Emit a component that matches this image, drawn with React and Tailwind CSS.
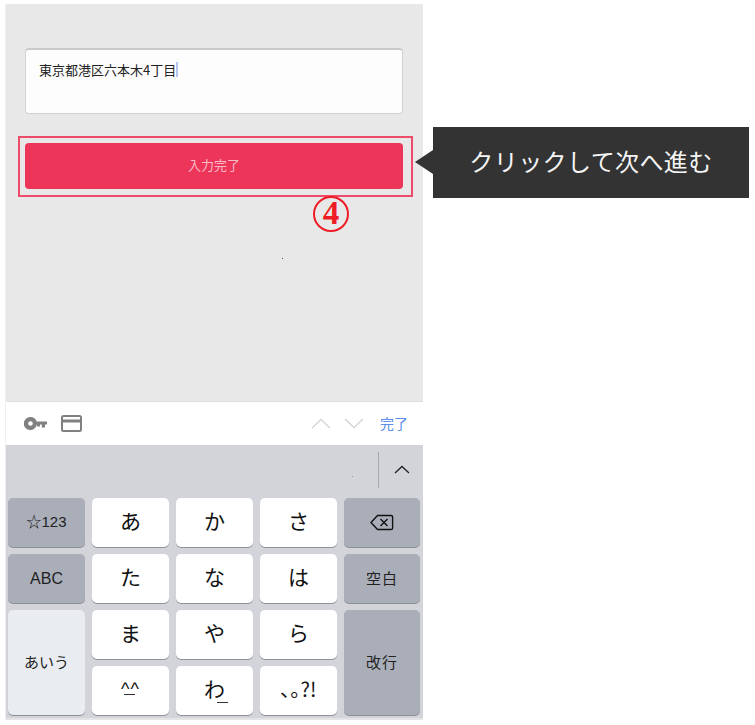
const jp = { fontFamily: '"Noto Sans CJK JP", "Liberation Sans", sans-serif' };
const latin = { fontFamily: '"Liberation Sans", "Noto Sans CJK JP", sans-serif' };

function Key({ children, kind = "white", className = "" }) {
  const bg =
    kind === "white"
      ? "bg-white text-[#111] text-[21px] pb-[3px]"
      : kind === "gray"
      ? "bg-[#a9aeb9] text-[#222] text-[15px]"
      : "bg-[#e9ecf0] text-[#222] text-[15px]";
  return (
    <div className={`flex items-center justify-center rounded-[5px] shadow-[0_1px_0_#8d9097] ${bg} ${className}`}>
      {children}
    </div>
  );
}

export default function App() {
  return (
    <div className="relative flex w-[755px] h-[725px] bg-white overflow-hidden" style={jp}>
      <div className="ml-[5px] mt-[4px] w-[418px] h-[716px] flex flex-col bg-[#e8e8e8] border-l border-[#efefef]">
        <div className="h-[398px] flex flex-col shrink-0 border-b border-[#dfdfdf] relative">
          <div className="mt-[44px] ml-[19px] h-[66px] w-[378px] bg-[#fdfdfd] rounded-[4px] border border-[#d2d2d2] border-t-2 border-t-[#c9c9c9] pl-[13px] pt-[10px] text-[13px] leading-[20px] text-[#222]">
            <span>東京都港区六本木4丁目</span>
            <span className="inline-block w-[2px] h-[15px] bg-[#b5c5f0] align-[-2px]" />
          </div>
          <div className="mt-[22px] ml-[12px] w-[395px] h-[61px] border-2 border-[#ec4c6a] flex items-center relative">
            <div className="ml-[5px] mt-[-1px] w-[378px] h-[46px] rounded-[4px] bg-[#ec3558] text-[#f9bcc8] text-[13px] pb-[2px] flex items-center justify-center">
              入力完了
            </div>
            <div
              className="absolute left-[293px] top-[58px] w-[36px] h-[36px] rounded-full border-2 border-[#ee1c25] text-[#ee1c25] text-[33px] font-bold flex items-center justify-center"
              style={{ fontFamily: '"Liberation Serif", serif' }}
            >
              4
            </div>
          </div>
          <div className="absolute left-[276px] top-[254px] w-px h-px bg-[#555]" />
        </div>

        <div className="h-[43px] bg-white shrink-0 flex items-center pl-[18px] pr-[15px]">
          <svg width="23" height="13" viewBox="0 0 23 13">
            <path
              fill="#808080"
              fillRule="evenodd"
              d="M6.5 0a6.5 6.5 0 0 1 6.2 4.5H23v3h-2v3h-3.2v-3H16v2h-3.2v-2h-.1A6.5 6.5 0 1 1 6.5 0Zm0 4.2a2.3 2.3 0 1 0 0 4.6 2.3 2.3 0 0 0 0-4.6Z"
            />
          </svg>
          <svg width="21" height="17" viewBox="0 0 21 17" className="ml-[14px]">
            <rect x="1" y="1" width="19" height="15" rx="1.5" fill="none" stroke="#808080" strokeWidth="2" />
            <rect x="1" y="4.5" width="19" height="3" fill="#808080" />
          </svg>
          <div className="flex-1" />
          <svg width="20" height="11" viewBox="0 0 20 11" className="mr-[1px]">
            <path d="M1 10 10 1.5 19 10" fill="none" stroke="#d4d4d4" strokeWidth="1.3" />
          </svg>
          <svg width="20" height="11" viewBox="0 0 20 11" className="ml-[12px] mr-[1px]">
            <path d="M1 1 10 9.5 19 1" fill="none" stroke="#d4d4d4" strokeWidth="1.3" />
          </svg>
          <span className="ml-[15px] text-[14px] text-[#5a8ee8]">完了</span>
        </div>

        <div className="flex-1 bg-[#d2d4da] flex flex-col border-b-2 border-[#e4e4e6]">
          <div className="h-[53px] shrink-0 flex items-center justify-end relative">
            <div className="absolute left-[346px] top-[31px] w-px h-px bg-[#999]" />
            <div className="w-px h-[36px] bg-[#a5a7ad] mr-[15px] mt-[-4px]" />
            <svg width="16" height="9" viewBox="0 0 16 9" className="mr-[13px] mt-[-4px]">
              <path d="M1 8 8 1.5 15 8" fill="none" stroke="#222" strokeWidth="1.3" />
            </svg>
          </div>
          <div className="ml-[2px] w-[412px] grid grid-cols-[77px_77px_77px_77px_76px] grid-rows-[49px_49px_49px_49px] gap-x-[7px] gap-y-[7px]">
            <Key kind="gray"><span style={latin}>☆123</span></Key>
            <Key>あ</Key>
            <Key>か</Key>
            <Key>さ</Key>
            <Key kind="gray">
              <svg width="24" height="17" viewBox="0 0 24 17" fill="none" stroke="#111" strokeWidth="1.4">
                <path d="M7.5 1.5H21a1.6 1.6 0 0 1 1.6 1.6v10.8a1.6 1.6 0 0 1-1.6 1.6H7.5L1 8.5Z" strokeLinejoin="round" />
                <path d="m10.5 5 7 7m0-7-7 7" />
              </svg>
            </Key>
            <Key kind="gray"><span className="text-[16px]" style={latin}>ABC</span></Key>
            <Key>た</Key>
            <Key>な</Key>
            <Key>は</Key>
            <Key kind="gray"><span className="tracking-[1px]">空白</span></Key>
            <Key kind="light" className="row-span-2">
              あいう
            </Key>
            <Key>ま</Key>
            <Key>や</Key>
            <Key>ら</Key>
            <Key kind="gray" className="row-span-2">
              <span className="tracking-[1px]">改行</span>
            </Key>
            <Key>
              <span className="relative text-[18px] tracking-[1px]" style={latin}>
                ^^
                <span className="absolute left-[3px] top-[18px] w-[11px] h-px bg-[#333]" />
              </span>
            </Key>
            <Key>
              <span className="relative">
                わ
                <span className="absolute left-[13px] top-[29px] w-[11px] h-px bg-[#333]" />
              </span>
            </Key>
            <Key>
              <span className="text-[20px] mt-[-1px]">､｡?!</span>
            </Key>
          </div>
        </div>
      </div>

      <div className="relative ml-[10px] mt-[127px] w-[316px] h-[71px] bg-[#333333] text-[#f5f5f5] text-[24px] tracking-[0.4px] flex items-center justify-center">
        <div className="absolute left-[-18px] top-[23px] w-0 h-0 border-y-[12px] border-y-transparent border-r-[18px] border-r-[#333333]" />
        <span className="mb-[3px]">クリックして次へ進む</span>
      </div>
    </div>
  );
}
